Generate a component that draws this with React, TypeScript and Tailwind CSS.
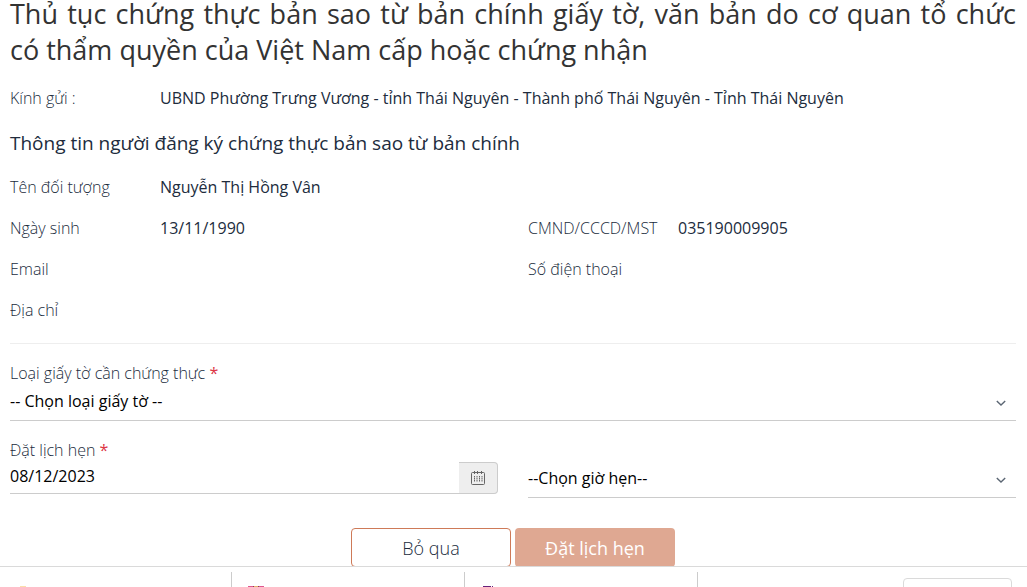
import type { ReactNode } from "react";

function Field({ label, children }: { label: string; children?: ReactNode }) {
  return (
    <div className="flex h-[41px] items-center">
      <dt className="w-[150px] shrink-0 font-light">{label}</dt>
      <dd className="min-w-0">{children}</dd>
    </div>
  );
}

function Chevron() {
  return (
    <svg
      className="pointer-events-none absolute right-[10px] bottom-3 size-[10px]"
      viewBox="0 0 10 10"
      fill="none"
      stroke="#5b6673"
      strokeWidth="1.4"
      aria-hidden="true"
    >
      <path d="M.8 3 5 7l4.200-4" />
    </svg>
  );
}

function CalendarIcon() {
  return (
    <svg width="14" height="14" viewBox="0 0 14 14" fill="none" stroke="#666" aria-hidden="true">
      <rect x=".5" y="1.500" width="13" height="12" rx="1" />
      <path d="M3.500 0v3M6.500 0v3M10.500 0v3" />
      <path d="M3.500 5v6M6 5v6M8.500 5v6M11 5v6" strokeDasharray="1.500 .5" />
    </svg>
  );
}

function Required() {
  return <span className="font-normal text-[#dc3545]">*</span>;
}

export default function App() {
  return (
    <div className="flex h-screen flex-col overflow-hidden bg-white font-['Open_Sans','Noto_Sans',sans-serif] text-base leading-6 text-[#212c3d]">
      <main className="min-h-0 flex-1 overflow-hidden pr-[11px] pl-[10px]">
        <h1 className="-mt-1 text-justify text-[27px] leading-9 text-[#333]">
          Thủ tục chứng thực bản sao từ bản chính giấy tờ, văn bản do cơ quan tổ chức có&nbsp;thẩm
          quyền của Việt Nam cấp hoặc chứng nhận
        </h1>

        <dl className="mt-[9px]">
          <Field label="Kính gửi :">
            UBND Phường Trưng Vương - tỉnh Thái Nguyên - Thành phố Thái Nguyên - Tỉnh Thái Nguyên
          </Field>
        </dl>

        <h2 className="mt-[13px] text-[19px] leading-6 font-medium">
          Thông tin người đăng ký chứng thực bản sao từ bản chính
        </h2>

        <dl className="mt-[11px]">
          <Field label="Tên đối tượng">Nguyễn Thị Hồng Vân</Field>
          <div className="grid grid-cols-2 gap-x-[30px]">
            <Field label="Ngày sinh">13/11/1990</Field>
            <Field label="CMND/CCCD/MST">035190009905</Field>
            <Field label="Email" />
            <Field label="Số điện thoại" />
          </div>
          <Field label="Địa chỉ" />
        </dl>

        <hr className="mt-[13px] border-[#eee]" />

        <form onSubmit={(e) => e.preventDefault()}>
          <div className="mt-[17px]">
            <label htmlFor="doc-type" className="block font-light">
              Loại giấy tờ cần chứng thực <Required />
            </label>
            <div className="relative border-b border-[#ccc]">
              <select
                id="doc-type"
                className="h-[35px] w-full appearance-none bg-transparent pb-1 text-black outline-none"
              >
                <option>-- Chọn loại giấy tờ --</option>
              </select>
              <Chevron />
            </div>
          </div>

          <div className="mt-[17px] grid grid-cols-2 gap-x-[30px]">
            <div>
              <label htmlFor="date" className="block font-light">
                Đặt lịch hẹn <Required />
              </label>
              <div className="flex h-8">
                <input
                  id="date"
                  defaultValue="08/12/2023"
                  className="min-w-0 flex-1 border-b border-[#ccc] pb-1 text-black outline-none"
                />
                <button
                  type="button"
                  aria-label="Chọn ngày"
                  className="flex w-[39px] items-center justify-center rounded-r border border-l-0 border-[#ccc] bg-[#eee]"
                >
                  <CalendarIcon />
                </button>
              </div>
            </div>
            <div className="relative mt-6 border-b border-[#ccc]">
              <select
                aria-label="Giờ hẹn"
                className="h-[35px] w-full appearance-none bg-transparent pb-1 text-black outline-none"
              >
                <option>--Chọn giờ hẹn--</option>
              </select>
              <Chevron />
            </div>
          </div>

          <div className="mt-[30px] flex justify-center gap-1">
            <button
              type="button"
              className="h-[39px] w-40 rounded border border-[#ce7a58] text-lg leading-6 font-light"
            >
              Bỏ qua
            </button>
            <button type="submit" className="h-[39px] w-40 rounded bg-[#dfa892] text-lg leading-6 text-white">
              Đặt lịch hẹn
            </button>
          </div>
        </form>
      </main>

      {/* Download shelf, only its top edge is in view. */}
      <footer className="flex h-[21px] shrink-0 overflow-hidden border-t border-[#dadada] bg-white pt-[5px] pr-[15px]">
        <div className="w-[232px] border-r border-[#ccc] pt-[14px] pl-5">
          <div className="h-px w-[6px] bg-[#fbdfab]" />
        </div>
        <div className="w-[233px] border-r border-[#ccc] pt-[14px] pl-4">
          <div className="flex h-px w-4 justify-center bg-[#e0568f]">
            <div className="w-[6px] border-x border-[#8a3a5a] bg-[#e8b36c]" />
          </div>
        </div>
        <div className="w-[233px] border-r border-[#ccc] pt-[14px] pl-[18px]">
          <div className="flex h-px gap-px">
            <div className="w-2 bg-[#68217a]" />
            <div className="w-px bg-[#68217a]" />
          </div>
        </div>
        <button
          type="button"
          aria-label="Hiển thị tất cả"
          className="mt-[6px] ml-auto h-7 w-[109px] rounded border border-[#dadada]"
        />
      </footer>
    </div>
  );
}
